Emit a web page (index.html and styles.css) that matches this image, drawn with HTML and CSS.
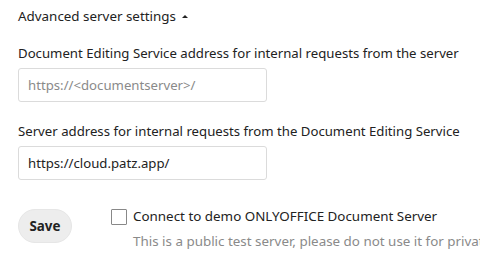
FILE: index.html
```html
<!DOCTYPE html>
<html>
<head>
  <title>ONLYOFFICE settings</title>
  <meta name="viewport" content="width=device-width, initial-scale=1.0">
  <link rel="stylesheet" href="styles.css">
</head>
<body>

  <div class="section">
    <h3 class="toggle">Advanced server settings <span class="caret"></span></h3>

    <label class="field-label" for="internalUrl">Document Editing Service address for internal requests from the server</label>
    <input class="field" id="internalUrl" type="text" placeholder="https://&lt;documentserver&gt;/">

    <label class="field-label" for="storageUrl">Server address for internal requests from the Document Editing Service</label>
    <input class="field" id="storageUrl" type="text" value="https://cloud.patz.app/">

    <div class="actions">
      <button class="save">Save</button>
      <div class="demo">
        <input class="check" id="demo" type="checkbox">
        <div class="demo-text">
          <label for="demo">Connect to demo ONLYOFFICE Document Server</label>
          <p class="hint">This is a public test server, please do not use it for private sensitive data.</p>
        </div>
      </div>
    </div>
  </div>

</body>
</html>
```

FILE: styles.css
```css
body { font-family: "Noto Sans", sans-serif; font-size: 13.2px; color: #222; margin: 0; overflow: hidden; }
.section { padding: 6px 0 0 18px; }
.toggle { font-size: 13.4px; font-weight: normal; line-height: 20px; margin: 0; display: flex; align-items: center; gap: 6px; }
.caret { width: 0; height: 0; border-left: 3.5px solid transparent; border-right: 3.5px solid transparent; border-bottom: 3.5px solid #222; }
.field-label { display: block; line-height: 20px; margin-top: 17px; white-space: nowrap; }
.field + .field-label { margin-top: 19px; }
.field {
  display: block; box-sizing: border-box;
  width: 249px; height: 34px; margin-top: 5px;
  padding: 0 9px; border: 1px solid #dbdbdb; border-radius: 3px;
  font: inherit; color: #222; background: #fff; outline: none;
}
.field::placeholder { color: #8a8a8a; }
.actions { display: flex; align-items: flex-start; margin-top: 29px; }
.save {
  flex: none; box-sizing: border-box;
  width: 54px; height: 34px; padding: 0; margin-right: 39px;
  border: 1px solid #e6e6e6; border-radius: 17px;
  background-color: #ededed; color: #222;
  font-family: "Noto Sans", sans-serif; font-size: 13.4px; font-weight: bold;
}
.demo { display: flex; align-items: flex-start; white-space: nowrap; margin-top: -3px; }
.check {
  appearance: none; width: 16px; height: 16px; margin: 3px 6px 0 0;
  border: 1px solid #888; border-radius: 1px; background: #fff; flex: none;
}
.demo-text label { display: block; line-height: 20px; font-size: 13.4px; }
.hint { margin: 5px 0 0; line-height: 20px; color: #8a8a8a; font-size: 13.4px; }
```
